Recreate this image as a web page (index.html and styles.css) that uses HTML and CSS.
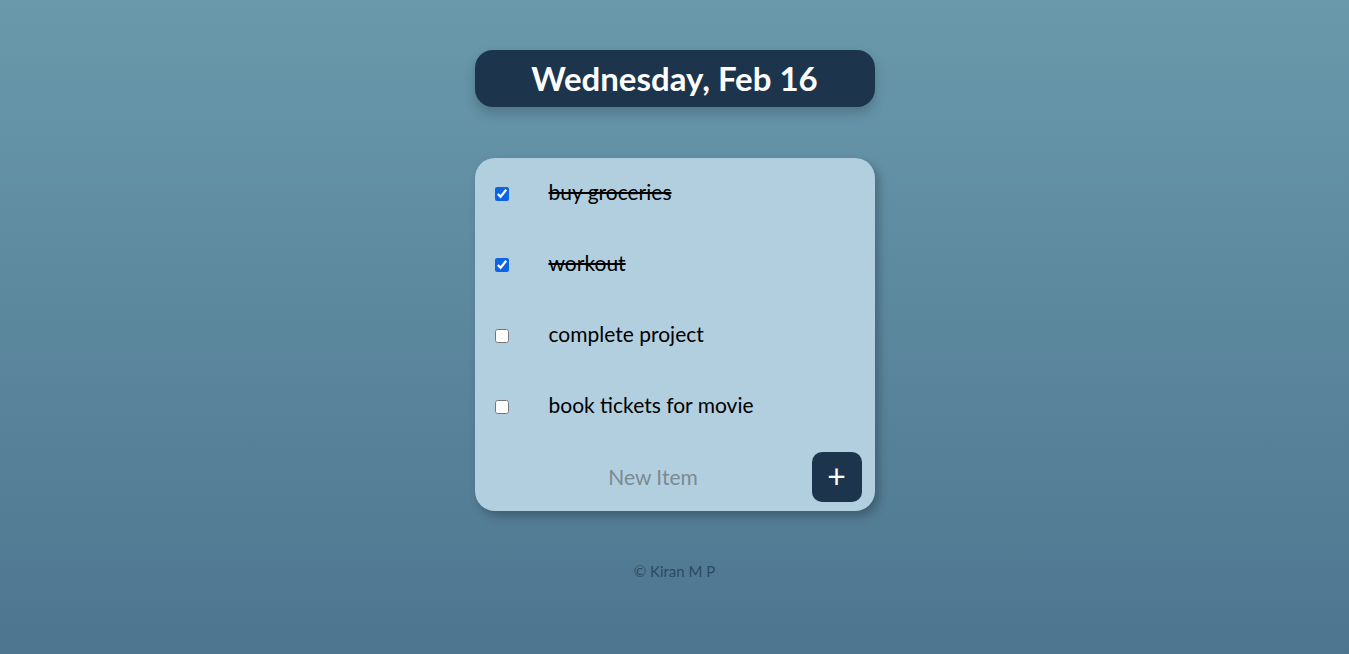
FILE: index.html
```html
<!DOCTYPE html>
<html>
<head>
<meta charset="utf-8">
<link rel="stylesheet" href="styles.css">
</head>
<body>
<div class="page">
  <div class="heading"><h1>Wednesday, Feb 16</h1></div>
  <div class="box">
    <div class="item"><input type="checkbox" checked><p class="done">buy groceries</p></div>
    <div class="item"><input type="checkbox" checked><p class="done">workout</p></div>
    <div class="item"><input type="checkbox"><p>complete project</p></div>
    <div class="item"><input type="checkbox"><p>book tickets for movie</p></div>
    <form class="new-item">
      <input type="text" placeholder="New Item">
      <button type="button" class="add">+</button>
    </form>
  </div>
  <footer class="footer">© Kiran M P</footer>
</div>
</body>
</html>
```
FILE: styles.css
```css
html, body {
  margin: 0;
  height: 100%;
}
body {
  background: linear-gradient(to bottom, #6999ab, #4e7590);
  font-family: "Lato", "Noto Sans", sans-serif;
}
.page {
  display: flex;
  flex-direction: column;
  align-items: center;
  padding-top: 50px;
}
.heading {
  width: 400px;
  height: 57px;
  background: #1c354d;
  border-radius: 18px;
  box-shadow: 0 6px 12px rgba(0, 0, 0, 0.2);
  display: flex;
  align-items: center;
  justify-content: center;
}
.heading h1 {
  margin: 0 0 2px;
  color: #fff;
  font-size: 33px;
  font-weight: 700;
}
.box {
  margin-top: 51px;
  width: 400px;
  background: #b1cfdf;
  border-radius: 20px;
  box-shadow: 4px 5px 10px rgba(0, 0, 0, 0.25);
  display: flex;
  flex-direction: column;
}
.item {
  height: 71px;
  display: flex;
  align-items: center;
  padding-left: 20px;
}
.item input {
  margin: 0;
  width: 14px;
  height: 14px;
  accent-color: #0b63e5;
}
.item p {
  margin: 0 0 4px 40px;
  font-size: 21px;
  color: #000;
}
.item p.done {
  text-decoration: line-through;
}
.new-item {
  display: flex;
  align-items: center;
  padding: 10px 13px 9px 20px;
}
.new-item input {
  flex: 1;
  min-width: 0;
  box-sizing: border-box;
  background: transparent;
  border: none;
  outline: none;
  text-align: center;
  font-family: inherit;
  font-size: 21px;
  height: 50px;
  padding: 0 0 2px;
}
.new-item input::placeholder {
  color: #7c8a92;
}
.add {
  width: 50px;
  height: 50px;
  border: none;
  border-radius: 10px;
  background: #1c354d;
  color: #fff;
  font-size: 32px;
  line-height: 1;
  padding: 0 0 3px;
  font-family: inherit;
}
.footer {
  margin-top: 51px;
  color: #2b4a63;
  font-size: 15px;
}
```
